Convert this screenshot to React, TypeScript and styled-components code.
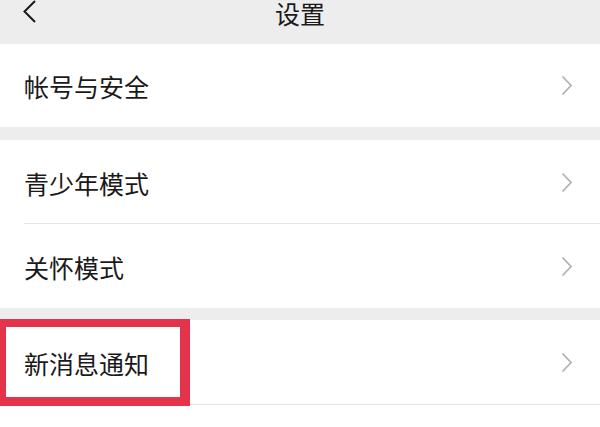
import styled, { createGlobalStyle } from "styled-components";

const GlobalStyle = createGlobalStyle`
  html, body {
    margin: 0;
    padding: 0;
    background: #ededed;
    font-family: "Noto Sans CJK SC", "Noto Sans", sans-serif;
    overflow: hidden;
  }
`;

const Page = styled.div`
  width: 600px;
  height: 427px;
  background: #ededed;
  overflow: hidden;
`;

const TopBar = styled.div`
  height: 64px;
  margin-top: -20px;
  display: flex;
  align-items: center;
  justify-content: center;
  position: relative;
  color: #1a1a1a;
`;

const BackButton = styled.div`
  position: absolute;
  left: 22px;
  top: 20px;
  width: 16px;
  height: 24px;
  display: flex;
  align-items: center;
  svg {
    display: block;
  }
`;

const Title = styled.div`
  font-size: 25px;
  line-height: 1;
  margin-top: 2px;
`;

const Group = styled.div<{ $gap: number }>`
  background: #fff;
  margin-top: ${(p) => p.$gap}px;
`;

const Row = styled.div<{ $h: number; $line?: boolean }>`
  position: relative;
  height: ${(p) => p.$h}px;
  display: flex;
  align-items: center;
  justify-content: space-between;
  padding: 0 27px 0 24px;
  box-sizing: border-box;

  &::after {
    content: "";
    display: ${(p) => (p.$line ? "block" : "none")};
    position: absolute;
    left: 24px;
    right: 0;
    bottom: 0;
    height: 1px;
    background: #e6e6e6;
  }
`;

const Label = styled.span`
  font-size: 25px;
  color: #1a1a1a;
  line-height: 1;
  margin-top: 2px;
`;

const Arrow = styled.svg`
  display: block;
`;

const Highlight = styled.div`
  position: absolute;
  z-index: 1;
  left: 0;
  top: -1px;
  width: 190px;
  height: 87px;
  box-sizing: border-box;
  border-style: solid;
  border-color: #e6334c;
  border-width: 8px 10px 9px 6px;
  pointer-events: none;
`;

const Chevron = () => (
  <Arrow width="12" height="21" viewBox="0 0 12 21">
    <path d="M1.5 1.5 L10 10.5 L1.5 19.5" fill="none" stroke="#b2b2b2" strokeWidth="1.8" />
  </Arrow>
);

export default function App() {
  return (
    <Page>
      <GlobalStyle />
      <TopBar>
        <BackButton>
          <svg width="16" height="24" viewBox="0 0 16 24">
            <path d="M13 1 L2.5 11.5 L13 22" fill="none" stroke="#1a1a1a" strokeWidth="2" />
          </svg>
        </BackButton>
        <Title>设置</Title>
      </TopBar>

      <Group $gap={0}>
        <Row $h={83}>
          <Label>帐号与安全</Label>
          <Chevron />
        </Row>
      </Group>

      <Group $gap={13}>
        <Row $h={84} $line>
          <Label>青少年模式</Label>
          <Chevron />
        </Row>
        <Row $h={84}>
          <Label>关怀模式</Label>
          <Chevron />
        </Row>
      </Group>

      <Group $gap={12}>
        <Row $h={85} $line>
          <Label>新消息通知</Label>
          <Chevron />
          <Highlight />
        </Row>
        <Row $h={40} />
      </Group>
    </Page>
  );
}
